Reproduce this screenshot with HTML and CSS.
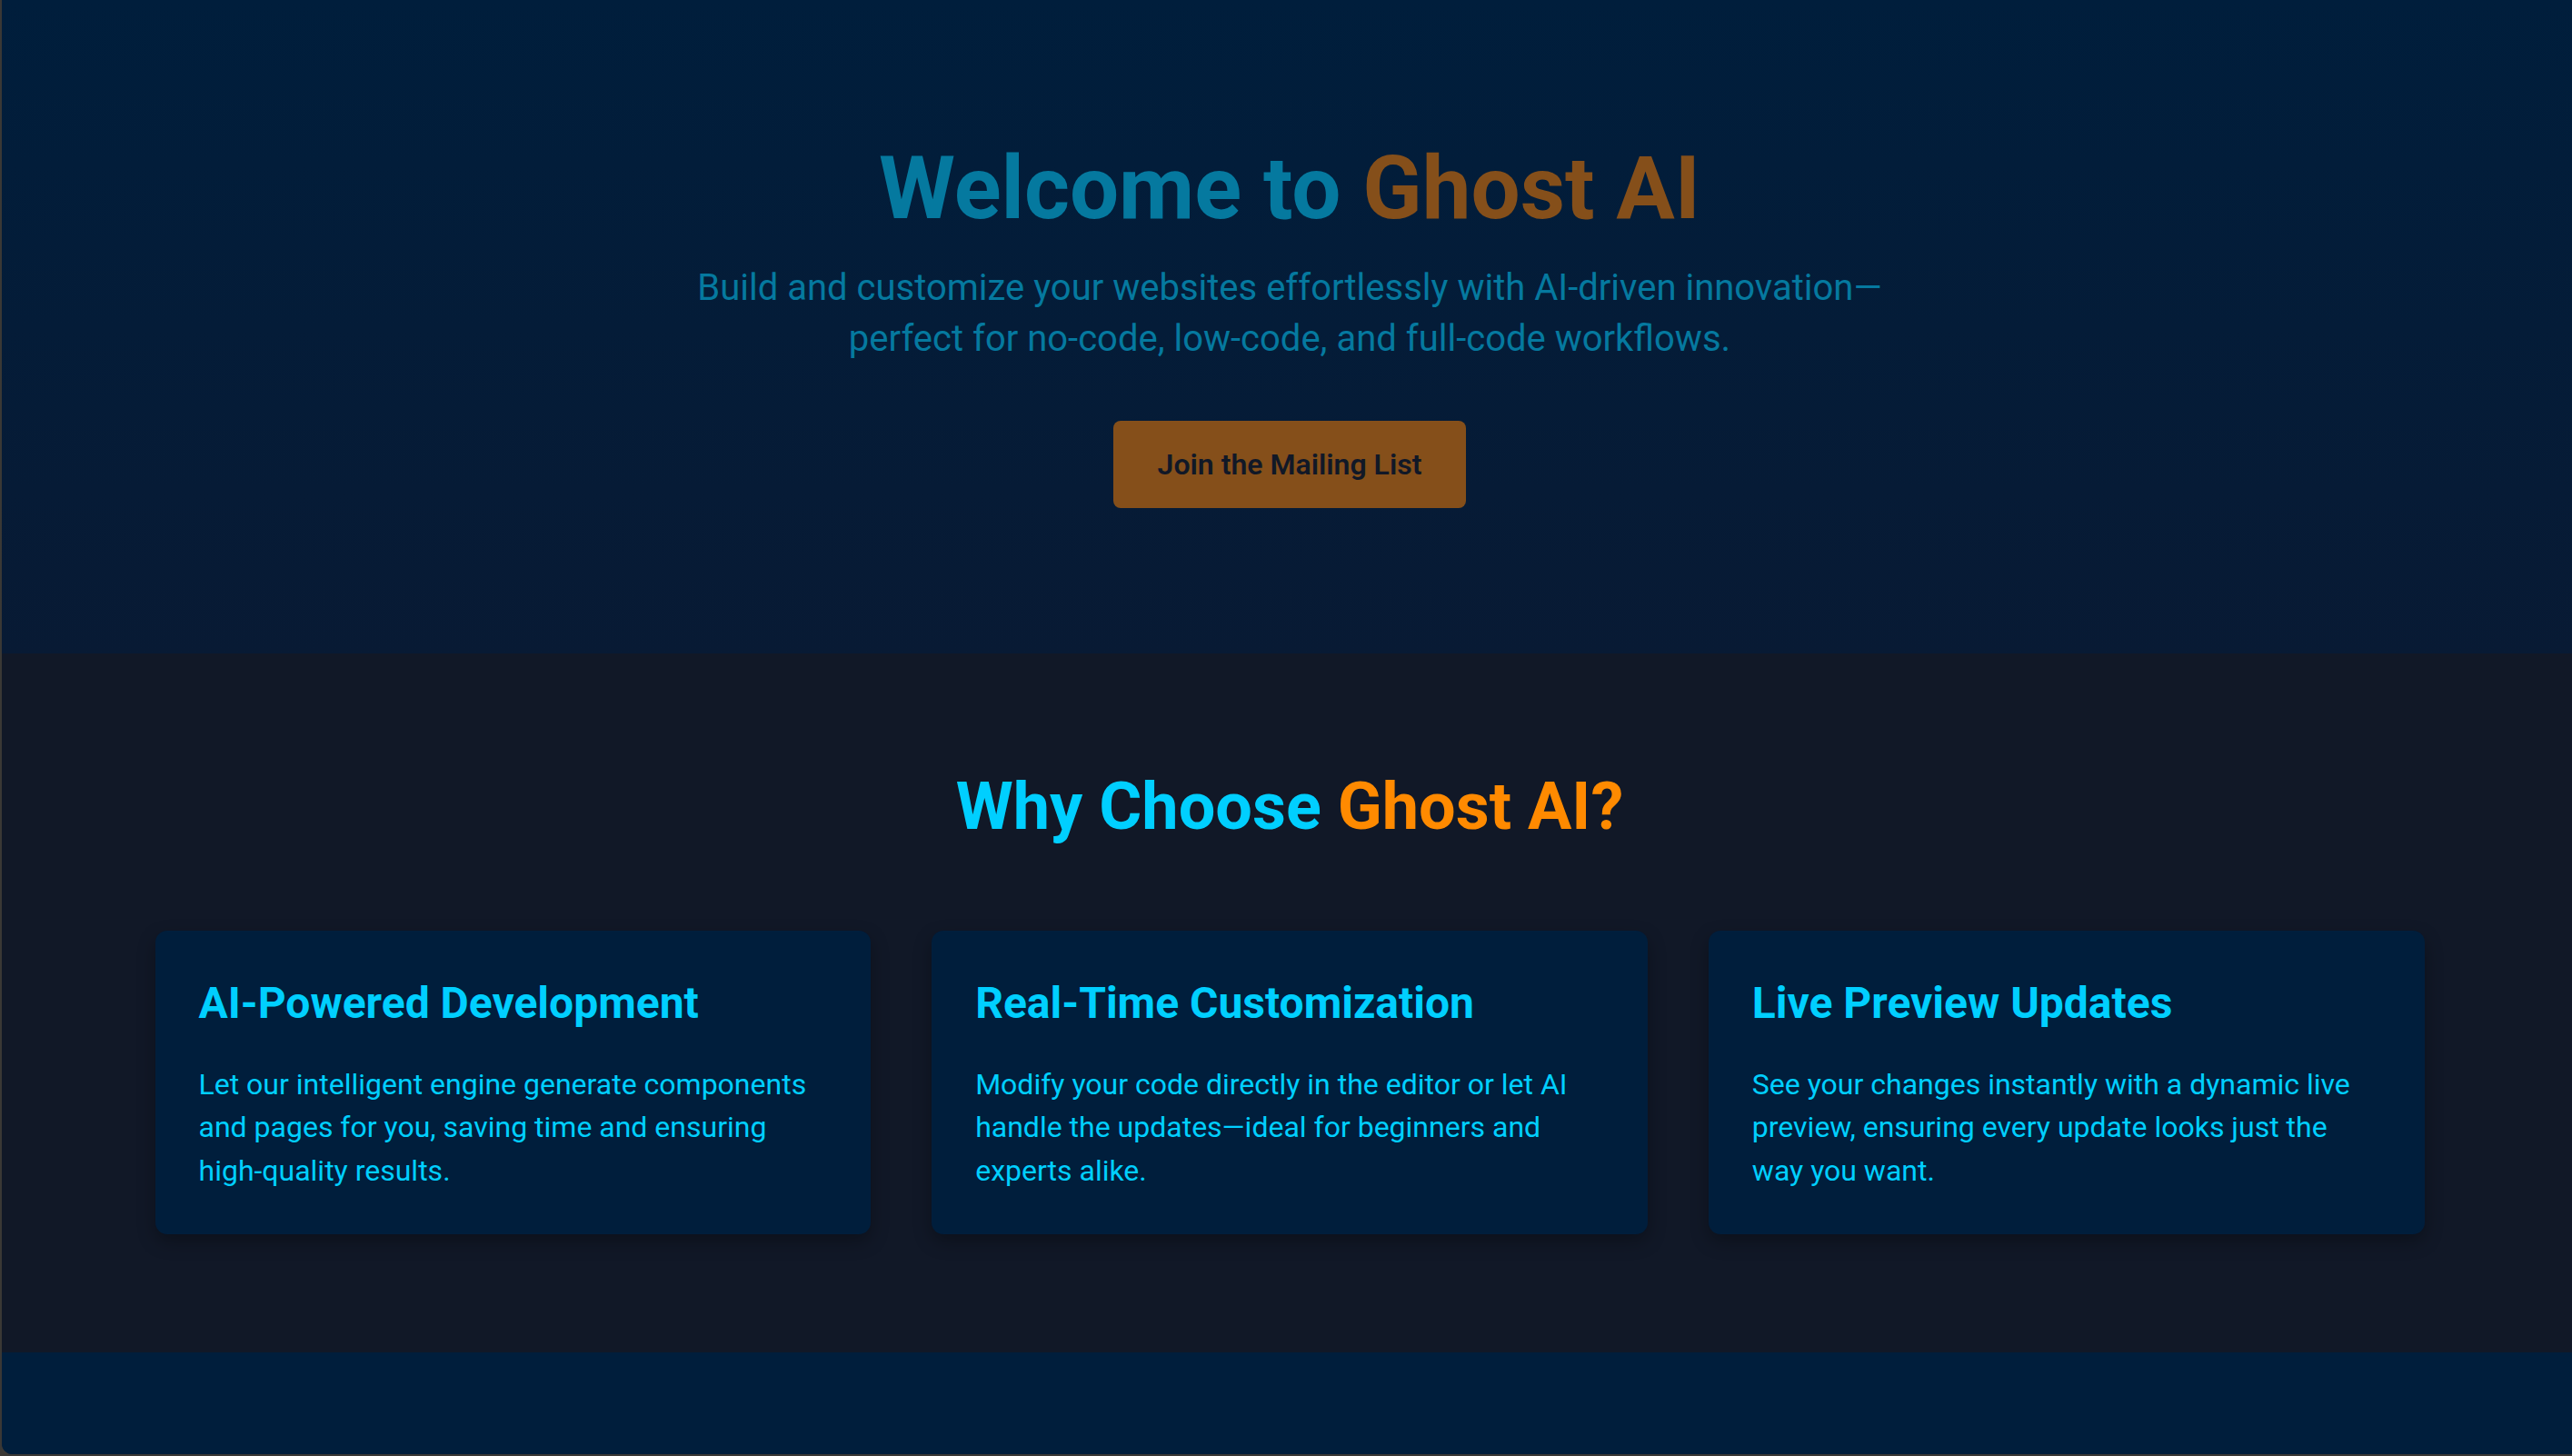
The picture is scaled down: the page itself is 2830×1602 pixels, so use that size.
FILE: index.html
```html
<!DOCTYPE html>
<html lang="en">
<head>
<meta charset="utf-8">
<title>Ghost AI</title>
<link rel="stylesheet" href="styles.css">
</head>
<body>
<div class="page">
  <header class="hero">
    <h1 class="hero-title"><span class="c-blue">Welcome to</span> <span class="c-orange">Ghost AI</span></h1>
    <p class="hero-sub">Build and customize your websites effortlessly with AI-driven innovation—perfect for no-code, low-code, and full-code workflows.</p>
    <a class="hero-btn" href="#">Join the Mailing List</a>
  </header>
  <section class="features">
    <h2 class="features-title"><span class="c-cyan">Why Choose</span> <span class="c-amber">Ghost AI?</span></h2>
    <div class="cards">
      <div class="card">
        <h3 class="card-title">AI-Powered Development</h3>
        <p class="card-text">Let our intelligent engine generate components and pages for you, saving time and ensuring high-quality results.</p>
      </div>
      <div class="card">
        <h3 class="card-title">Real-Time Customization</h3>
        <p class="card-text">Modify your code directly in the editor or let AI handle the updates—ideal for beginners and experts alike.</p>
      </div>
      <div class="card">
        <h3 class="card-title">Live Preview Updates</h3>
        <p class="card-text">See your changes instantly with a dynamic live preview, ensuring every update looks just the way you want.</p>
      </div>
    </div>
  </section>
  <footer class="footer"></footer>
</div>
</body>
</html>
```
FILE: styles.css
```css
html, body {
  margin: 0;
  padding: 0;
  background: #3a3835;
}
body {
  font-family: Roboto, "Liberation Sans", Arial, sans-serif;
  width: 2830px;
  height: 1602px;
  overflow: hidden;
}
.page {
  margin-left: 2px;
  height: 1600px;
  border-bottom-left-radius: 12px;
  overflow: hidden;
  display: flex;
  flex-direction: column;
  background: #001e3c;
}
.hero {
  height: 719px;
  box-sizing: border-box;
  padding: 150px 0 0 6px;
  display: flex;
  flex-direction: column;
  align-items: center;
  text-align: center;
  background: linear-gradient(180deg, #001e3c 0%, #081a34 100%);
}
.hero-title {
  margin: 0;
  font-size: 96px;
  font-weight: 700;
  line-height: 1.2;
}
.c-blue { color: #05799f; }
.c-orange { color: #854f1a; }
.hero-sub {
  margin: 24px 0 0;
  max-width: 1360px;
  font-size: 40px;
  line-height: 56px;
  color: #05799f;
}
.hero-btn {
  margin-top: 62px;
  display: inline-block;
  padding: 24px 49px;
  font-size: 32px;
  line-height: 48px;
  font-weight: 600;
  color: #111827;
  background: #854f1a;
  border-radius: 8px;
  text-decoration: none;
}
.features {
  height: 769px;
  box-sizing: border-box;
  padding: 126px 0 0 6px;
  background: #111827;
  display: flex;
  flex-direction: column;
  align-items: center;
}
.features-title {
  margin: 0;
  font-size: 72px;
  font-weight: 700;
  line-height: 1.2;
  text-align: center;
}
.c-cyan { color: #00cfff; }
.c-amber { color: #ff8a00; }
.cards {
  margin-top: 93px;
  width: 2497px;
  display: grid;
  grid-template-columns: repeat(3, 1fr);
  gap: 67px;
}
.card {
  background: #001e3c;
  border-radius: 13px;
  padding: 51px 48px 46px;
  box-shadow: 0 8px 20px rgba(0, 0, 0, 0.3);
}
.card-title {
  margin: 0;
  font-size: 48px;
  font-weight: 700;
  line-height: 1.2;
  color: #00cfff;
}
.card-text {
  margin: 37px 0 0;
  font-size: 32px;
  line-height: 47.5px;
  color: #00cfff;
}
.footer {
  flex: 1;
  background: #001e3c;
}
```
